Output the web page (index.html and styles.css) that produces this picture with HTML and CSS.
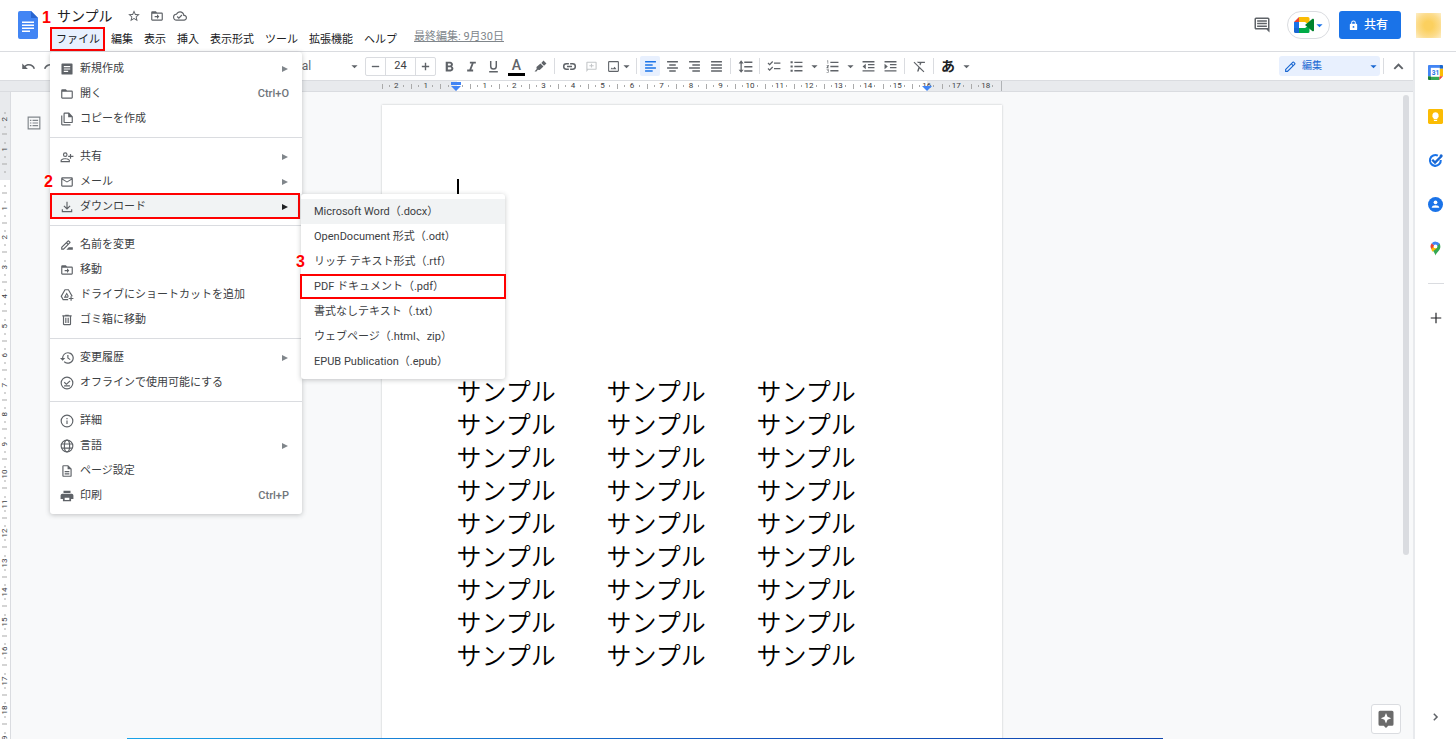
FILE: index.html
```html
<!DOCTYPE html>
<html lang="ja">
<head>
<meta charset="utf-8">
<title>サンプル</title>
<link rel="stylesheet" href="styles.css">
</head>
<body>
<svg class="sprite" aria-hidden="true">
  <symbol id="caret" viewBox="0 0 8 8"><path d="M0.5 2.5h7L4 6z"/></symbol>
  <symbol id="arrow" viewBox="0 0 8 8"><path d="M1 1l6 3-6 3z"/></symbol>
  <symbol id="star" viewBox="0 0 24 24"><path d="M22 9.2l-7.2-.6L12 2 9.200 8.600 2 9.200l5.500 4.700L5.800 21l6.200-3.700 6.200 3.700-1.600-7.100zM12 15.400l-3.800 2.300 1-4.300-3.300-2.900 4.400-.4L12 6.100l1.700 4 4.400.4-3.300 2.900 1 4.300z"/></symbol>
  <symbol id="move" viewBox="0 0 24 24"><path d="M20 6h-8l-2-2H4a2 2 0 0 0-2 2v12c0 1.100.9 2 2 2h16a2 2 0 0 0 2-2V8a2 2 0 0 0-2-2zm0 12H4V8h16zM12 17l4-4-4-4v3H8v2h4z"/></symbol>
  <symbol id="folder" viewBox="0 0 24 24"><path d="M20 6h-8l-2-2H4a2 2 0 0 0-2 2v12c0 1.100.9 2 2 2h16a2 2 0 0 0 2-2V8a2 2 0 0 0-2-2zm0 12H4V8h16z"/></symbol>
  <symbol id="cloud" viewBox="0 0 24 24"><path d="M19.350 10.040A7.490 7.490 0 0 0 12 4C9.110 4 6.600 5.640 5.350 8.040A5.994 5.994 0 0 0 0 14c0 3.310 2.690 6 6 6h13c2.760 0 5-2.240 5-5 0-2.640-2.050-4.780-4.650-4.960zM19 18H6c-2.210 0-4-1.790-4-4 0-2.050 1.530-3.760 3.560-3.970l1.070-.11.5-.95A5.469 5.469 0 0 1 12 6c2.620 0 4.880 1.860 5.390 4.430l.3 1.500 1.530.11A2.980 2.980 0 0 1 22 15c0 1.650-1.350 3-3 3zm-9-3.820l-2.090-2.090L6.500 13.500 10 17l6.010-6.010-1.410-1.410z"/></symbol>
  <symbol id="comment" viewBox="0 0 24 24"><path d="M22 4a2 2 0 0 0-2-2H4a2 2 0 0 0-2 2v12c0 1.100.9 2 2 2h14l4 4zM20 16H4V4h16zM5.500 12.500h13v2h-13zm0-3.500h13v2h-13zm0-3.500h13v2h-13z"/></symbol>
  <symbol id="lock" viewBox="0 0 24 24"><path d="M18 8h-1V6A5 5 0 0 0 7 6v2H6a2 2 0 0 0-2 2v10c0 1.100.9 2 2 2h12a2 2 0 0 0 2-2V10a2 2 0 0 0-2-2zm-6 9a2 2 0 1 1 0-4 2 2 0 0 1 0 4zm3-9H9V6a3 3 0 0 1 6 0z"/></symbol>
  <symbol id="undo" viewBox="0 0 24 24"><path d="M12.500 8c-2.650 0-5.050 1-6.900 2.600L2 7v9h9l-3.620-3.620A8.040 8.040 0 0 1 12.500 10.500c3.540 0 6.550 2.310 7.600 5.500l2.370-.78A10.500 10.500 0 0 0 12.500 8z"/></symbol>
  <symbol id="redo" viewBox="0 0 24 24"><path d="M18.400 10.600A10.500 10.500 0 0 0 1.540 15.220L3.900 16a8 8 0 0 1 12.720-3.620L13 16h9V7z"/></symbol>
  <symbol id="minus" viewBox="0 0 24 24"><path d="M4 10.500h16v3H4z"/></symbol>
  <symbol id="plus" viewBox="0 0 24 24"><path d="M10.500 4h3v6.500H20v3h-6.500V20h-3v-6.500H4v-3h6.500z"/></symbol>
  <symbol id="plusthin" viewBox="0 0 24 24"><path d="M11 3h2v8h8v2h-8v8h-2v-8H3v-2h8z"/></symbol>
  <symbol id="bold" viewBox="0 0 24 24"><path d="M16.500 11.800c1.100-.8 1.900-2.100 1.900-3.400C18.400 5.600 16.200 3 13.200 3H5v18h9.200c3 0 5-2.400 5-5.100 0-1.900-1.100-3.400-2.700-4.100zM9 6.300h3.700a2 2 0 0 1 0 4H9zm4.300 11.400H9v-4.300h4.300a2.100 2.100 0 0 1 0 4.300z"/></symbol>
  <symbol id="italic" viewBox="0 0 24 24"><path d="M9 3v3.300h3.300L8.100 17.700H4V21h11v-3.300h-3.300l4.200-11.400H20V3z"/></symbol>
  <symbol id="underline" viewBox="0 0 24 24"><path d="M12 18a6.500 6.500 0 0 0 6.500-6.500V2h-2.700v9.500a3.800 3.800 0 0 1-7.600 0V2H5.500v9.500A6.500 6.500 0 0 0 12 18zM4 20.500h16V23H4z"/></symbol>
  <symbol id="marker" viewBox="0 0 24 24"><path d="M17.500 1l5.500 5.500-4.500 4-5-5zM12 6.500l5.500 5.500-7 6.500-3.500-.5L4.500 21H1l4-4.500-.5-3.500z"/></symbol>
  <symbol id="link" viewBox="0 0 24 24"><path d="M3.900 12A3.100 3.100 0 0 1 7 8.900h4V6.500H7a5.500 5.500 0 0 0 0 11h4v-2.400H7A3.100 3.100 0 0 1 3.900 12zM8 13.200h8v-2.400H8zm9-6.700h-4v2.400h4a3.100 3.100 0 0 1 0 6.200h-4v2.400h4a5.500 5.500 0 0 0 0-11z"/></symbol>
  <symbol id="addcomment" viewBox="0 0 24 24"><path d="M20 3H4a1.500 1.500 0 0 0-1.500 1.500V22L6 18h14a1.500 1.500 0 0 0 1.500-1.500v-12A1.500 1.500 0 0 0 20 3zm-.5 13h-15V5h15zM11 14h2v-2.500h3v-2h-3V7h-2v2.500H8v2h3z"/></symbol>
  <symbol id="image" viewBox="0 0 24 24"><path d="M20 2H4a2 2 0 0 0-2 2v16c0 1.100.9 2 2 2h16a2 2 0 0 0 2-2V4a2 2 0 0 0-2-2zm0 18H4V4h16zM14 12.500l-3 3.500-2-2.300L6.500 17h11z"/></symbol>
  <symbol id="al" viewBox="0 0 24 24"><path d="M2 2h20v2.700H2zm0 5.700h14v2.700H2zm0 5.700h20v2.700H2zm0 5.700h14v2.700H2z"/></symbol>
  <symbol id="ac" viewBox="0 0 24 24"><path d="M2 2h20v2.700H2zm4 5.700h12v2.700H6zm-4 5.700h20v2.700H2zm4 5.700h12v2.700H6z"/></symbol>
  <symbol id="ar" viewBox="0 0 24 24"><path d="M2 2h20v2.700H2zm6 5.700h14v2.700H8zm-6 5.700h20v2.700H2zm6 5.700h14v2.700H8z"/></symbol>
  <symbol id="aj" viewBox="0 0 24 24"><path d="M2 2h20v2.700H2zm0 5.700h20v2.700H2zm0 5.700h20v2.700H2zm0 5.700h20v2.700H2z"/></symbol>
  <symbol id="spacing" viewBox="0 0 24 24"><path d="M10 4h13v2.500H10zm0 7h13v2.500H10zm0 7h13v2.500H10zM4 7v10H1l4 5 4-5H6V7h3L5 2 1 7z"/></symbol>
  <symbol id="checklist" viewBox="0 0 24 24"><path d="M12 6h11v2H12zm0 9.500h11v2H12zM4.500 11L1 7.500 2.400 6l2.100 2.100L9 3.500 10.500 5zm0 9.500L1 17l1.400-1.500 2.100 2.100L9 13l1.500 1.500z"/></symbol>
  <symbol id="bullets" viewBox="0 0 24 24"><path d="M8 3h15v2.400H8zm0 7.800h15v2.400H8zm0 7.800h15V21H8zM1 2.500h4v3.400H1zm0 7.800h4v3.400H1zm0 7.800h4v3.400H1z"/></symbol>
  <symbol id="numbers" viewBox="0 0 24 24"><path d="M8 3h15v2.400H8zm0 7.800h15v2.400H8zm0 7.800h15V21H8zM2 1h2v6H3V2.500H2zM1 9h4v2.500L3 14h2v1H1v-1.300L3.500 10H1zm0 8h4v6H1v-1h3v-1.500H2v-1h2V18H1z"/></symbol>
  <symbol id="outdent" viewBox="0 0 24 24"><path d="M1 2h22v2.400H1zm10 5.500h12v2.400H11zm0 5.500h12v2.400H11zM1 19h22v2.400H1zM1 12l6-5v10z"/></symbol>
  <symbol id="indent" viewBox="0 0 24 24"><path d="M1 2h22v2.400H1zm10 5.500h12v2.400H11zm0 5.500h12v2.400H11zM1 19h22v2.400H1zM7 12L1 7v10z"/></symbol>
  <symbol id="clear" viewBox="0 0 24 24"><path d="M7 3h15v2.500h-6.500L13.700 10l-2-2 1-2.500H9.300zM2.500 3L1 4.500l9 9L7.500 21h2.800l1.800-5.400 7.400 6.900L21 21z"/></symbol>
  <symbol id="pencil" viewBox="0 0 24 24"><path d="M20.700 5.600l-2.300-2.300a1.800 1.800 0 0 0-2.600 0L2 17.100V22h4.900L20.700 8.200a1.800 1.800 0 0 0 0-2.600zM6 20H4v-2l9.500-9.500 2 2zm11-11l-2-2 2.100-2.200 2.100 2.100z"/></symbol>
  <symbol id="up" viewBox="0 0 24 24"><path d="M12 6l-9 9 2.500 2.500L12 11l6.500 6.500L21 15z"/></symbol>
  <symbol id="right" viewBox="0 0 24 24"><path d="M8 3l9 9-9 9-2.500-2.500L12 12 5.500 5.500z"/></symbol>
  <symbol id="outline" viewBox="0 0 24 24"><path d="M1 1h22v22H1zm2 2v18h18V3zM9.500 6.500H19v2H9.500zm0 4.500H19v2H9.500zm0 4.500H19v2H9.500zM5 6.500h2.500v2H5zM5 11h2.500v2H5zm0 4.500h2.500v2H5z" fill-rule="evenodd"/></symbol>
  <symbol id="doc" viewBox="0 0 24 24"><path fill-rule="evenodd" d="M4 2.500h16A1.500 1.500 0 0 1 21.500 4v16a1.500 1.500 0 0 1-1.500 1.500H4A1.500 1.500 0 0 1 2.500 20V4A1.500 1.500 0 0 1 4 2.500zM6.500 7v2h11V7zm0 4v2h11v-2zm0 4v2h7.500v-2z"/></symbol>
  <symbol id="copy" viewBox="0 0 24 24"><path d="M15.500 1H8a2 2 0 0 0-2 2v14c0 1.100.9 2 2 2h12a2 2 0 0 0 2-2V7.500zM20 17H8V3h6v6h6zM4 6H2v15c0 1.100.9 2 2 2h14v-2H4z"/></symbol>
  <symbol id="adduser" viewBox="0 0 24 24"><path d="M9 12a4 4 0 1 0 0-8 4 4 0 0 0 0 8zm0-6a2 2 0 1 1 0 4 2 2 0 0 1 0-4zm0 8c-2.700 0-8 1.300-8 4v3h16v-3c0-2.700-5.300-4-8-4zm6 5H3v-1c0-.7 3.100-2 6-2s6 1.300 6 2zM19 7h-2v3h-3v2h3v3h2v-3h4v-2h-4z"/></symbol>
  <symbol id="mail" viewBox="0 0 24 24"><path d="M20 4H4a2 2 0 0 0-2 2v12c0 1.100.9 2 2 2h16a2 2 0 0 0 2-2V6a2 2 0 0 0-2-2zm0 14H4V8l8 5 8-5zm-8-7L4 6h16z"/></symbol>
  <symbol id="download" viewBox="0 0 24 24"><path d="M13 3h-2v10L7.400 9.400 6 10.900l6 6 6-6-1.400-1.500L13 13zM3 16v5h18v-5h-2v3H5v-3z"/></symbol>
  <symbol id="rename" viewBox="0 0 24 24"><path d="M17.700 6.500l-2.300-2.300a1.500 1.500 0 0 0-2.100 0L2 15.500V20h4.500L17.700 8.700a1.500 1.500 0 0 0 0-2.200zM5.700 18H4v-1.700l7-7L12.700 11zM14 9.600L12.400 8l2-2L16 7.600zM15 16l-4 4h11v-4z"/></symbol>
  <symbol id="driveadd" viewBox="0 0 24 24"><path fill-rule="evenodd" d="M8 2h7l7 12h-2.400l-5.700-10H9.200L3.400 14l2.500 5H14v2H4.800L1 14zM11.500 7.500L6.500 16.500H14v-2H9.700l1.900-3.300 1.700 3.300h2.100zM18 14h2v3h3v2h-3v3h-2v-3h-3v-2h3z"/></symbol>
  <symbol id="trash" viewBox="0 0 24 24"><path d="M15 4V3H9v1H4v2h1v13c0 1.100.9 2 2 2h10a2 2 0 0 0 2-2V6h1V4zm2 15H7V6h10zM9 8h2v9H9zm4 0h2v9h-2z"/></symbol>
  <symbol id="history" viewBox="0 0 24 24"><path d="M13.500 2A10 10 0 0 0 3.500 12H0l4.500 4.500L9 12H5.500a8 8 0 1 1 2.400 5.600L6.500 19A10 10 0 1 0 13.500 2zM12.500 7v5.500l4.500 3 1-1.500-3.500-2.300V7z"/></symbol>
  <symbol id="offline" viewBox="0 0 24 24"><path d="M12 1a11 11 0 1 0 0 22 11 11 0 0 0 0-22zm0 20a9 9 0 1 1 0-18 9 9 0 0 1 0 18zM7 16h10v2H7zM16.500 7.500L11 13l-3-3-1.400 1.400L11 15.500l7-6.500z"/></symbol>
  <symbol id="info" viewBox="0 0 24 24"><path d="M11 7h2v2h-2zm0 4h2v6h-2zm1-10a11 11 0 1 0 0 22 11 11 0 0 0 0-22zm0 20a9 9 0 1 1 0-18 9 9 0 0 1 0 18z"/></symbol>
  <symbol id="globe" viewBox="0 0 24 24"><g fill="none" stroke="currentColor" stroke-width="2"><circle cx="12" cy="12" r="10"/><ellipse cx="12" cy="12" rx="4.500" ry="10"/><path d="M3 8.500h18M3 15.500h18"/></g></symbol>
  <symbol id="page" viewBox="0 0 24 24"><path d="M14 2H6a2 2 0 0 0-2 2v16c0 1.100.9 2 2 2h12a2 2 0 0 0 2-2V8zm4 18H6V4h7v5h5zM8 12h8v2H8zm0 4h8v2H8z"/></symbol>
  <symbol id="print" viewBox="0 0 24 24"><path fill-rule="evenodd" d="M6 3h12v4H6zM4 8h16a3 3 0 0 1 3 3v6h-4v4H5v-4H1v-6a3 3 0 0 1 3-3zm4 7v4h8v-4z"/></symbol>
</svg>

<div class="app">
  <header class="header">
    <a class="logo" href="#" aria-label="ドキュメント ホーム">
      <svg viewBox="0 0 20 28"><path fill="#4285f4" d="M2 0h11l7 7v19a2 2 0 0 1-2 2H2a2 2 0 0 1-2-2V2a2 2 0 0 1 2-2z"/><path fill="#2a66d0" d="M13 0l7 7h-7z"/><path fill="#fff" d="M4 10.500h12V12H4zm0 3h12V15H4zm0 3h12V18H4zm0 3h8V21H4z"/></svg>
    </a>
    <div class="heading">
      <div class="title-row">
        <h1 class="title">サンプル</h1>
        <button class="plain" aria-label="スター"><svg class="i14"><use href="#star"/></svg></button>
        <button class="plain" aria-label="移動"><svg class="i14"><use href="#move"/></svg></button>
        <button class="plain" aria-label="ドキュメントのステータス"><svg class="i14"><use href="#cloud"/></svg></button>
        <span class="step step-1">1</span>
      </div>
      <nav class="menubar">
        <button class="menu-btn open">ファイル</button>
        <button class="menu-btn">編集</button>
        <button class="menu-btn">表示</button>
        <button class="menu-btn">挿入</button>
        <button class="menu-btn">表示形式</button>
        <button class="menu-btn">ツール</button>
        <button class="menu-btn">拡張機能</button>
        <button class="menu-btn">ヘルプ</button>
        <a class="last-edit" href="#">最終編集: 9月30日</a>
      </nav>
      <ul class="menu file-menu">
        <li class="item"><svg class="i14"><use href="#doc"/></svg><span>新規作成</span><svg class="more"><use href="#arrow"/></svg></li>
        <li class="item"><svg class="i14"><use href="#folder"/></svg><span>開く</span><kbd>Ctrl+O</kbd></li>
        <li class="item"><svg class="i14"><use href="#copy"/></svg><span>コピーを作成</span></li>
        <li class="rule"></li>
        <li class="item"><svg class="i14"><use href="#adduser"/></svg><span>共有</span><svg class="more"><use href="#arrow"/></svg></li>
        <li class="item"><svg class="i14"><use href="#mail"/></svg><span>メール</span><svg class="more"><use href="#arrow"/></svg></li>
        <li class="item active"><svg class="i14"><use href="#download"/></svg><span>ダウンロード</span><svg class="more"><use href="#arrow"/></svg>
          <span class="step step-2">2</span>
          <ul class="menu submenu">
            <li class="item hover">Microsoft Word（.docx）</li>
            <li class="item">OpenDocument 形式（.odt）</li>
            <li class="item">リッチ テキスト形式（.rtf）</li>
            <li class="item target">PDF ドキュメント（.pdf）<span class="step step-3">3</span></li>
            <li class="item">書式なしテキスト（.txt）</li>
            <li class="item">ウェブページ（.html、zip）</li>
            <li class="item">EPUB Publication（.epub）</li>
          </ul>
        </li>
        <li class="rule"></li>
        <li class="item"><svg class="i14"><use href="#rename"/></svg><span>名前を変更</span></li>
        <li class="item"><svg class="i14"><use href="#move"/></svg><span>移動</span></li>
        <li class="item"><svg class="i14"><use href="#driveadd"/></svg><span>ドライブにショートカットを追加</span></li>
        <li class="item"><svg class="i14"><use href="#trash"/></svg><span>ゴミ箱に移動</span></li>
        <li class="rule"></li>
        <li class="item"><svg class="i14"><use href="#history"/></svg><span>変更履歴</span><svg class="more"><use href="#arrow"/></svg></li>
        <li class="item"><svg class="i14"><use href="#offline"/></svg><span>オフラインで使用可能にする</span></li>
        <li class="rule"></li>
        <li class="item"><svg class="i14"><use href="#info"/></svg><span>詳細</span></li>
        <li class="item"><svg class="i14"><use href="#globe"/></svg><span>言語</span><svg class="more"><use href="#arrow"/></svg></li>
        <li class="item"><svg class="i14"><use href="#page"/></svg><span>ページ設定</span></li>
        <li class="item"><svg class="i14"><use href="#print"/></svg><span>印刷</span><kbd>Ctrl+P</kbd></li>
      </ul>
    </div>
    <div class="account">
      <button class="plain" aria-label="コメント履歴"><svg class="i18"><use href="#comment"/></svg></button>
      <button class="meet" aria-label="Meet">
        <svg class="meet-logo" viewBox="0 0 20 16"><path fill="#ea4335" d="M0 5L5 0v5z"/><path fill="#1a73e8" d="M0 5h5v6H0z"/><path fill="#1967d2" d="M0 11h5v5H1.500A1.500 1.500 0 0 1 0 14.500z"/><path fill="#fbbc04" d="M5 0h9a1.500 1.500 0 0 1 1.500 1.500V8L11 5H5z"/><path fill="#00ac47" d="M5 11h6l4.500-3v6.500A1.500 1.500 0 0 1 14 16H5z"/><path fill="#00832d" d="M11 8l7.500-6.200c.6-.4 1.500 0 1.500.7v11c0 .7-.9 1.100-1.500.7z"/></svg>
        <svg class="caret"><use href="#caret"/></svg>
      </button>
      <button class="share"><svg class="i11"><use href="#lock"/></svg>共有</button>
      <span class="avatar"></span>
    </div>
  </header>

  <div class="body">
    <main class="editor">
      <div class="toolbar">
        <button class="tool" aria-label="元に戻す"><svg class="i15"><use href="#undo"/></svg></button>
        <button class="tool" aria-label="やり直し"><svg class="i15"><use href="#redo"/></svg></button>
        <label class="picker font-picker"><select aria-label="フォント"><option>Arial</option></select><svg class="caret"><use href="#caret"/></svg></label>
        <div class="size">
          <button aria-label="小さく"><svg class="i11"><use href="#minus"/></svg></button>
          <input type="text" value="24" aria-label="フォントサイズ">
          <button aria-label="大きく"><svg class="i11"><use href="#plus"/></svg></button>
        </div>
        <button class="tool" aria-label="太字"><svg class="i13"><use href="#bold"/></svg></button>
        <button class="tool" aria-label="斜体"><svg class="i13"><use href="#italic"/></svg></button>
        <button class="tool" aria-label="下線"><svg class="i13"><use href="#underline"/></svg></button>
        <button class="tool color" aria-label="テキストの色">A</button>
        <button class="tool" aria-label="ハイライト"><svg class="i13"><use href="#marker"/></svg></button>
        <i class="sep"></i>
        <button class="tool" aria-label="リンク"><svg class="i15"><use href="#link"/></svg></button>
        <button class="tool off" aria-label="コメント追加"><svg class="i13"><use href="#addcomment"/></svg></button>
        <button class="tool" aria-label="画像"><svg class="i13"><use href="#image"/></svg></button>
        <svg class="caret narrow"><use href="#caret"/></svg>
        <i class="sep"></i>
        <button class="tool on" aria-label="左揃え"><svg class="i13"><use href="#al"/></svg></button>
        <button class="tool" aria-label="中央揃え"><svg class="i13"><use href="#ac"/></svg></button>
        <button class="tool" aria-label="右揃え"><svg class="i13"><use href="#ar"/></svg></button>
        <button class="tool" aria-label="両端揃え"><svg class="i13"><use href="#aj"/></svg></button>
        <i class="sep"></i>
        <button class="tool" aria-label="行間隔"><svg class="i15"><use href="#spacing"/></svg></button>
        <i class="sep"></i>
        <button class="tool" aria-label="チェックリスト"><svg class="i14"><use href="#checklist"/></svg></button>
        <button class="tool" aria-label="箇条書き"><svg class="i13"><use href="#bullets"/></svg></button>
        <svg class="caret"><use href="#caret"/></svg>
        <button class="tool" aria-label="番号付きリスト"><svg class="i13"><use href="#numbers"/></svg></button>
        <svg class="caret"><use href="#caret"/></svg>
        <button class="tool" aria-label="インデント減"><svg class="i13"><use href="#outdent"/></svg></button>
        <button class="tool" aria-label="インデント増"><svg class="i13"><use href="#indent"/></svg></button>
        <i class="sep"></i>
        <button class="tool" aria-label="書式をクリア"><svg class="i13"><use href="#clear"/></svg></button>
        <i class="sep"></i>
        <button class="tool ime">あ</button>
        <svg class="caret"><use href="#caret"/></svg>
        <label class="picker mode"><svg class="i13"><use href="#pencil"/></svg><select aria-label="モード"><option>編集</option></select><svg class="caret"><use href="#caret"/></svg></label>
        <i class="sep"></i>
        <button class="tool" aria-label="メニューを非表示"><svg class="i13"><use href="#up"/></svg></button>
      </div>

      <div class="hruler">
        <div class="scale">
          <span>2</span><span>1</span><span></span><span>1</span><span>2</span><span>3</span><span>4</span><span>5</span><span>6</span><span>7</span><span>8</span><span>9</span><span>10</span><span>11</span><span>12</span><span>13</span><span>14</span><span>15</span><span>16</span><span>17</span><span>18</span>
          <svg class="stop stop-left" viewBox="0 0 12 10"><path d="M1 0h10v3H1zM1 4h10L6 9z"/></svg>
          <svg class="stop stop-right" viewBox="0 0 12 10"><path d="M1 4h10L6 9z"/></svg>
        </div>
      </div>

      <div class="workspace">
        <div class="vruler">
          <div class="vscale">
            <span>2</span><span>1</span><span></span><span>1</span><span>2</span><span>3</span><span>4</span><span>5</span><span>6</span><span>7</span><span>8</span><span>9</span><span>10</span><span>11</span><span>12</span><span>13</span><span>14</span><span>15</span><span>16</span><span>17</span><span>18</span><span>19</span>
          </div>
        </div>
        <button class="outline-btn" aria-label="概要を表示"><svg class="i14"><use href="#outline"/></svg></button>
        <div class="canvas">
          <article class="paper">
            <div class="cursor"></div>
            <table class="samples">
              <tr><td>サンプル</td><td>サンプル</td><td>サンプル</td></tr>
              <tr><td>サンプル</td><td>サンプル</td><td>サンプル</td></tr>
              <tr><td>サンプル</td><td>サンプル</td><td>サンプル</td></tr>
              <tr><td>サンプル</td><td>サンプル</td><td>サンプル</td></tr>
              <tr><td>サンプル</td><td>サンプル</td><td>サンプル</td></tr>
              <tr><td>サンプル</td><td>サンプル</td><td>サンプル</td></tr>
              <tr><td>サンプル</td><td>サンプル</td><td>サンプル</td></tr>
              <tr><td>サンプル</td><td>サンプル</td><td>サンプル</td></tr>
              <tr><td>サンプル</td><td>サンプル</td><td>サンプル</td></tr>
            </table>
          </article>
        </div>
        <div class="edge">
          <div class="thumb"></div>
          <button class="explore" aria-label="データ探索"><svg class="i18" viewBox="0 0 24 24"><path d="M4 1h16a2 2 0 0 1 2 2v16a2 2 0 0 1-2 2h-5l-3 3-3-3H4a2 2 0 0 1-2-2V3a2 2 0 0 1 2-2z"/><path fill="#fff" d="M12 4l2 5 5 2-5 2-2 5-2-5-5-2 5-2z"/></svg></button>
        </div>
      </div>
    </main>

    <aside class="side">
      <button class="plain" aria-label="カレンダー"><svg class="i15" viewBox="0 0 16 16"><path fill="#4285f4" d="M1 0h11v4H4v8H0V1a1 1 0 0 1 1-1z"/><path fill="#1967d2" d="M12 0h3a1 1 0 0 1 1 1v3h-4z"/><path fill="#fbbc04" d="M12 4h4v8h-4z"/><path fill="#34a853" d="M4 12h8v4H4z"/><path fill="#188038" d="M0 12h4v4H1a1 1 0 0 1-1-1z"/><path fill="#ea4335" d="M12 12h4l-4 4z"/><path fill="#fff" d="M3 3h9.500v9.500H3z"/><text x="8" y="10.500" text-anchor="middle" class="cal">31</text></svg></button>
      <button class="plain" aria-label="Keep"><svg class="i15" viewBox="0 0 16 16"><rect width="16" height="16" rx="1.500" fill="#fbbc04"/><path fill="#fff" d="M8 3.500a3.500 3.500 0 0 0-2 6.300V11h4V9.800a3.500 3.500 0 0 0-2-6.300zM6.300 11.600h3.400v1.200H6.300z"/></svg></button>
      <button class="plain" aria-label="ToDo リスト"><svg class="i15" viewBox="0 0 16 16"><path fill="none" stroke="#1a73e8" stroke-width="2.200" d="M10.500 2.800A5.800 5.800 0 1 0 13.600 7.500"/><path fill="none" stroke="#1967d2" stroke-width="2.600" d="M4.500 7.200l3 3 7-7"/><circle cx="14" cy="3" r="1.600" fill="#1967d2"/></svg></button>
      <button class="plain" aria-label="連絡先"><svg class="i15" viewBox="0 0 16 16"><circle cx="8" cy="8" r="8" fill="#1a73e8"/><circle cx="8" cy="5.700" r="2" fill="#fff"/><path fill="#fff" d="M3.900 11.500C3.900 9.500 6 8.700 8 8.700s4.100.8 4.100 2.800z"/></svg></button>
      <button class="plain" aria-label="マップ"><svg class="i15" viewBox="0 0 16 16"><path fill="#34a853" d="M13.200 6c0 4-4 5.500-5.200 9.500C7.400 13 6 11.300 4.600 9.500L12 2.500A5.200 5.200 0 0 1 13.200 6z"/><path fill="#fbbc04" d="M3.300 8L7 4l2.600 3.500-5 4z"/><path fill="#ea4335" d="M4 2.500L7 5 3.600 8.600A5.200 5.200 0 0 1 4 2.500z"/><path fill="#4285f4" d="M4 2.500a5.200 5.200 0 0 1 8.300.5L9 6.500 7 5z"/><circle cx="8" cy="5.800" r="2" fill="#fff"/></svg></button>
      <hr>
      <button class="plain dark" aria-label="アドオンを取得"><svg class="i14"><use href="#plusthin"/></svg></button>
      <button class="plain collapse" aria-label="サイドパネルを非表示"><svg class="i10"><use href="#right"/></svg></button>
    </aside>
  </div>
  <div class="progress"></div>
</div>
</body>
</html>
```
FILE: styles.css
```css
* { box-sizing: border-box; }
:root {
  --paper: 620px;
  --ink: #3c4043;
  --grey: #5f6368;
  --line: #dadce0;
  --mark: #ff0000;
}
body {
  margin: 0;
  background: #fff;
  color: var(--ink);
  font: 11px/16px Roboto, "Noto Sans CJK JP", sans-serif;
}
button, input, select { font: inherit; color: inherit; margin: 0; padding: 0; border: 0; background: none; }
button { display: flex; align-items: center; justify-content: center; }
svg { display: block; flex: none; fill: currentColor; }
ul { list-style: none; margin: 0; padding: 0; }
.sprite { width: 0; height: 0; position: absolute; }
.i10 { width: 10px; height: 10px; }
.i11 { width: 11px; height: 11px; }
.i13 { width: 13px; height: 13px; }
.i14 { width: 14px; height: 14px; }
.i15 { width: 15px; height: 15px; }
.i18 { width: 18px; height: 18px; }
.caret { width: 7px; height: 7px; margin: 0 3px 0 4px; color: var(--grey); }
.caret.narrow { margin: 0 3px 0 -1px; }
.plain { color: var(--grey); }

.app { display: flex; flex-direction: column; height: 100vh; overflow: hidden; position: relative; }

.header { display: flex; height: 52px; flex: none; border-bottom: 1px solid var(--line); padding: 0 15px 0 18px; }
.logo { width: 20px; height: 28px; margin-top: 11px; }
.heading { position: relative; margin-left: 12px; }
.title-row { position: relative; display: flex; align-items: center; gap: 9px; height: 27px; padding: 5px 0 0 7px; }
.title { margin: 0 5px 0 0; font-size: 14px; font-weight: 400; line-height: 20px; color: #202124; }
.menubar { display: flex; height: 24px; color: #202124; }
.menu-btn { height: 24px; padding: 1px 5px 0 6px; white-space: nowrap; }
.menu-btn.open { background: #e8f0fe; outline: 2px solid var(--mark); outline-offset: -2px; }
.last-edit { margin-left: 12px; padding-top: 2px; color: #80868b; white-space: nowrap; }

.step { position: absolute; color: var(--mark); font: bold 16px/18px "Liberation Sans", sans-serif; text-shadow: 0 0 2px #fff, 0 0 2px #fff; }
.step-1 { left: -8px; top: 9px; }
.step-2 { left: -6px; top: -21px; }
.step-3 { left: -5px; top: -21px; }

.menu { position: absolute; background: #fff; border-radius: 3px; box-shadow: 0 1px 5px rgba(60, 64, 67, .3); z-index: 5; }
.file-menu { top: 52px; left: 0; width: 252px; padding: 4px 0 6px; }
.item { position: relative; display: flex; align-items: center; height: 25px; padding: 1px 13px 0 10px; white-space: nowrap; }
.item > svg { color: var(--grey); }
.item > .i14 + span { margin-left: 6px; }
.item > .more { width: 8px; height: 8px; margin-left: auto; color: #80868b; }
.item kbd { margin-left: auto; font: inherit; font-weight: 500; color: #70757a; }
.rule { height: 1px; margin: 6px 0; background: var(--line); }
.item.active { background: #f1f3f4; }
.item.active > .more { color: #202124; }
.item.active::after, .item.target::after { content: ""; position: absolute; inset: -1px 2px 0 0; border: 2px solid var(--mark); pointer-events: none; }
.submenu { left: 251px; top: 0; width: 204px; padding: 5px 0; font-size: 11px; }
.submenu .item { padding: 1px 13px 0; }
.item.hover { background: #f1f3f4; }
.submenu .item.target::after { inset: 0 -1px 0 -1px; }

.account { display: flex; align-items: flex-start; margin-left: auto; padding-top: 11px; }
.account > .plain { height: 28px; margin-right: 16px; }
.meet { width: 43px; height: 28px; border: 1px solid var(--line); border-radius: 14px; margin-right: 9px; }
.meet-logo { width: 20px; height: 16px; }
.meet .caret { margin: 0 0 0 2px; color: #1a73e8; }
.share { gap: 5px; width: 62px; height: 28px; padding-right: 4px; border-radius: 3px; background: #1a73e8; color: #fff; font-size: 12px; font-weight: 500; margin-right: 15px; }
.avatar { width: 25px; height: 25px; margin-top: 2px; background: radial-gradient(circle, #fbd05f 25%, #fcdc8c 65%, #fdeec8); }

.body { display: flex; flex: 1; min-height: 0; }
.editor { display: flex; flex-direction: column; flex: 1; min-width: 0; }
.toolbar { display: flex; align-items: center; height: 29px; flex: none; padding: 0 4px 0 17px; border-bottom: 1px solid var(--line); color: var(--grey); }
.tool { width: 22px; height: 20px; flex: none; }
.sep { width: 1px; height: 16px; margin: 0 3px; background: var(--line); }
.tool.off { color: #c4c7c9; }
.tool.on { width: 20px; margin: 0 1px 0 0; border-radius: 2px; background: #e8f0fe; color: #1a73e8; }
.tool.color { width: 17px; margin: 0 4px; border-bottom: 3px solid #000; font-size: 14px; font-weight: 500; line-height: 16px; }
.tool.ime { font-size: 14px; font-weight: 700; color: #202124; }
.picker { display: flex; align-items: center; height: 20px; }
.picker select { flex: 1; min-width: 0; appearance: none; }
.font-picker { width: 74px; margin-left: 226px; font-size: 12px; }
.font-picker .caret { margin: 0 3px; }
.size { display: flex; height: 19px; margin: 0 2px 0 4px; border: 1px solid var(--line); border-radius: 2px; }
.size button { width: 19px; }
.size input { width: 31px; border: solid var(--line); border-width: 0 1px; text-align: center; color: var(--ink); }
.mode { gap: 5px; width: 101px; margin-left: auto; padding: 0 3px 0 5px; border-radius: 3px; background: #e8f0fe; color: #1967d2; font-size: 10px; }
.mode .caret { margin: 0; color: #1967d2; }

.hruler { display: flex; justify-content: center; height: 11px; flex: none; padding-right: 30px; background: #e8eaed; border-bottom: 1px solid var(--line); }
.scale { position: relative; display: grid; grid-template-columns: repeat(21, 1fr); width: var(--paper); border-right: 1px solid #b0b3b6; background: linear-gradient(90deg, transparent 75px, #fff 75px, #fff 545px, transparent 545px); }
.scale span { text-align: center; font-size: 8px; line-height: 10px; background: linear-gradient(#aaa, #aaa) 0 50% / 1px 5px, linear-gradient(#aaa, #aaa) 25% 50% / 1px 2px, linear-gradient(#aaa, #aaa) 75% 50% / 1px 2px; background-repeat: no-repeat; }
.stop { position: absolute; top: 1px; width: 12px; height: 10px; color: #4285f4; }
.stop-left { left: 68px; }
.stop-right { left: 539px; }

.workspace { display: flex; flex: 1; min-height: 0; background: #f8f9fa; }
.vruler { width: 11px; padding-top: 13px; overflow: hidden; border-right: 1px solid var(--line); background: linear-gradient(#e8eaed 88px, #fff 88px); }
.vscale { display: grid; grid-template-rows: repeat(22, 1fr); height: 649px; }
.vscale span { display: flex; align-items: center; justify-content: center; writing-mode: vertical-rl; transform: rotate(180deg); font-size: 8px; line-height: 10px; background: linear-gradient(#aaa, #aaa) 50% 0 / 5px 1px, linear-gradient(#aaa, #aaa) 50% 25% / 2px 1px, linear-gradient(#aaa, #aaa) 50% 75% / 2px 1px; background-repeat: no-repeat; }
.outline-btn { align-self: flex-start; margin: 24px 0 0 16px; color: #80868b; }
.canvas { display: flex; justify-content: center; flex: 1; padding: 13px 29px 0 0; overflow: hidden; }
.paper { width: var(--paper); height: 877px; flex: none; padding: 74px 75px; background: #fff; box-shadow: 0 0 2px rgba(60, 64, 67, .3); color: #000; }
.cursor { width: 2px; height: 30px; background: #000; }
.samples { margin-top: 165px; border-collapse: collapse; font: 350 25px/33px "Noto Sans CJK JP", sans-serif; }
.samples td { width: 150px; padding: 0; }
.edge { display: flex; flex-direction: column; justify-content: space-between; align-items: flex-end; width: 42px; padding: 3px 4px 5px 0; }
.thumb { width: 6px; height: 460px; border-radius: 3px; background: var(--line); }
.explore { width: 30px; height: 30px; margin-right: 8px; border: 1px solid var(--line); border-radius: 3px; background: #fff; color: #6b6b6b; }

.side { display: flex; flex-direction: column; align-items: center; gap: 29px; width: 43px; padding: 13px 0 17px; border-left: 2px solid #e8eaed; }
.side hr { width: 16px; height: 1px; margin: -2px 0; border: 0; background: var(--line); }
.cal { font: bold 7px Roboto, sans-serif; fill: #1a73e8; }
.dark { color: #202124; }
.collapse { margin-top: auto; }
.progress { position: absolute; bottom: 0; left: 127px; right: 293px; height: 1px; background: linear-gradient(90deg, #19a3e8, #1557c0 60%, #1048b0); }
```
